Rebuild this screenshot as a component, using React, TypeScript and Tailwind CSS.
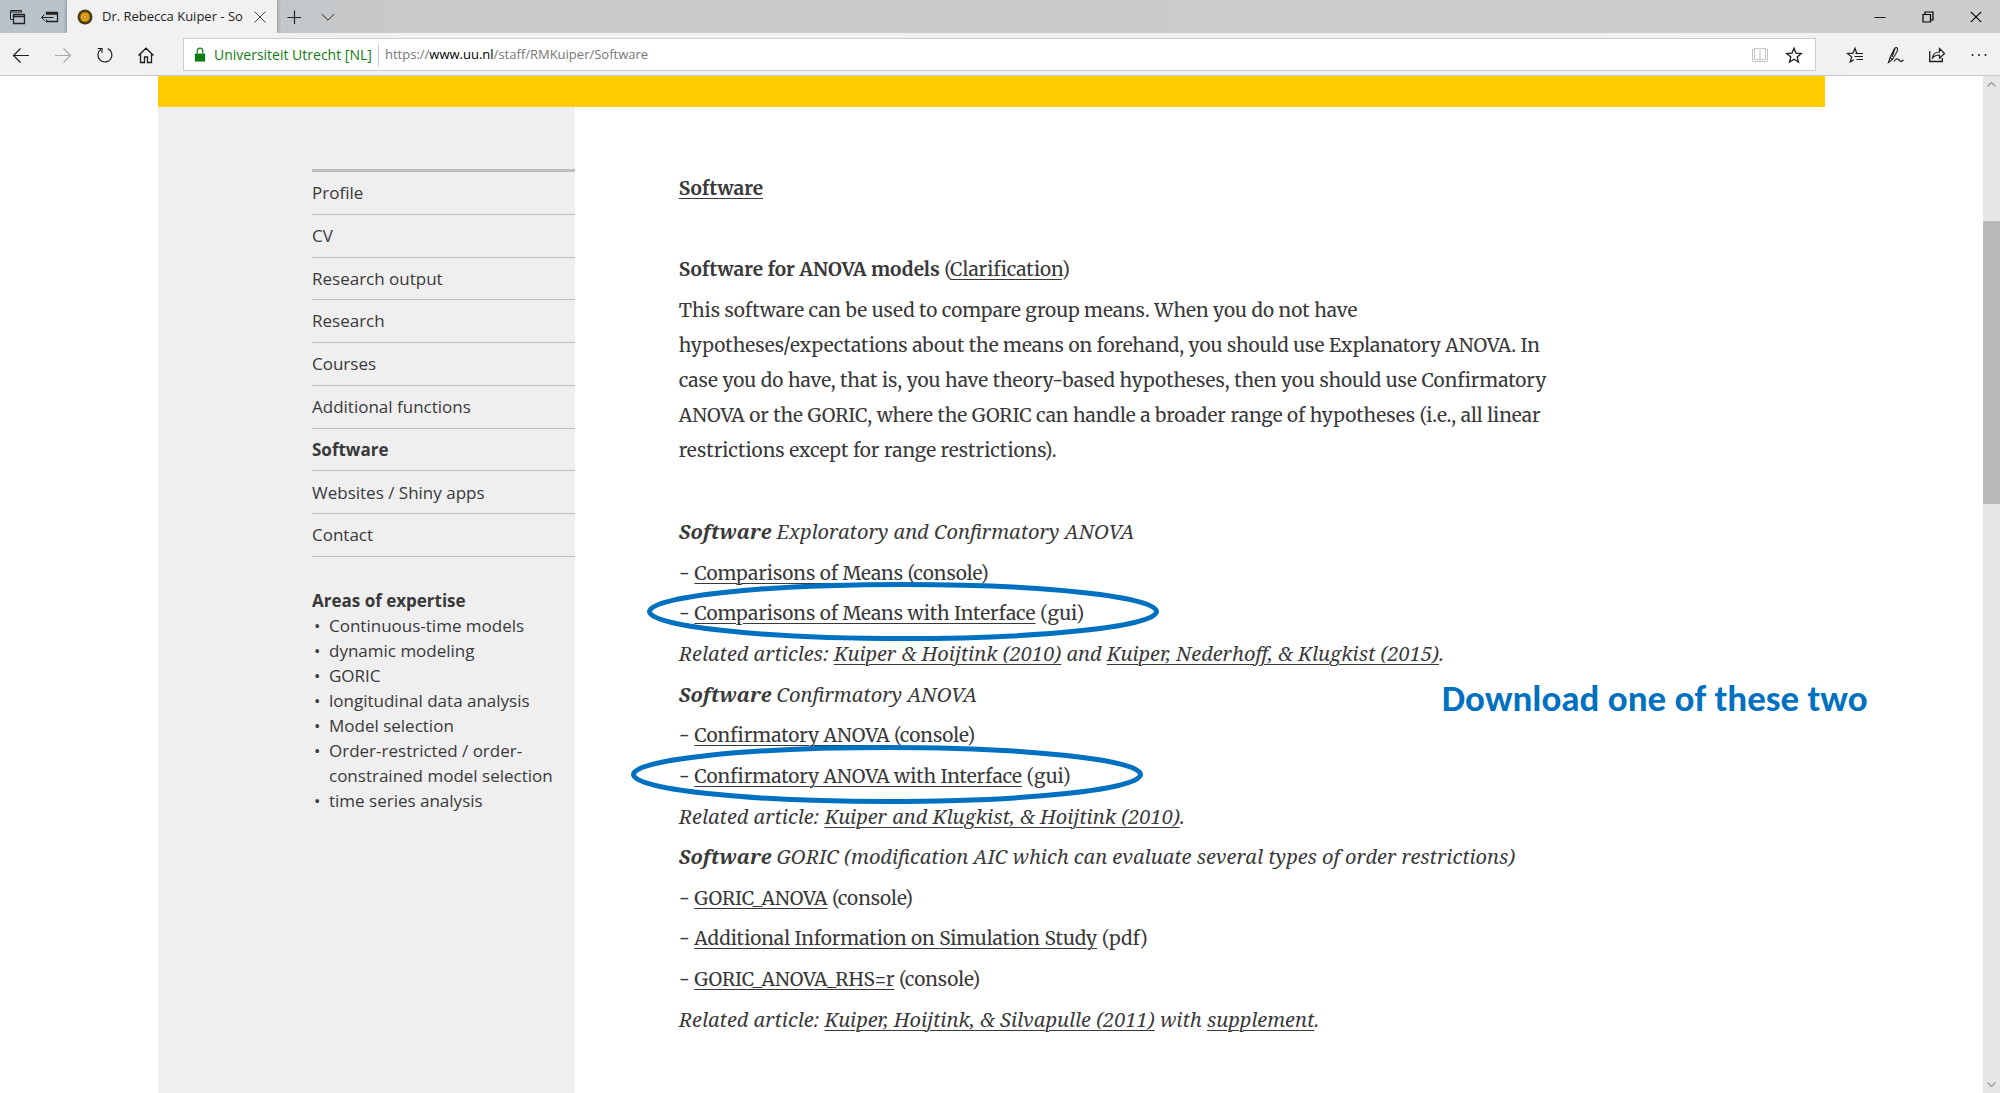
import React from 'react';

const NAV = [
  'Profile',
  'CV',
  'Research output',
  'Research',
  'Courses',
  'Additional functions',
  'Software',
  'Websites / Shiny apps',
  'Contact',
];

const AREAS = [
  'Continuous-time models',
  'dynamic modeling',
  'GORIC',
  'longitudinal data analysis',
  'Model selection',
  'Order-restricted / order-constrained model selection',
  'time series analysis',
];

function Icon({ children }: { children: React.ReactNode }) {
  return (
    <svg
      viewBox="0 0 16 16"
      aria-hidden="true"
      className="size-4 shrink-0 overflow-visible fill-none stroke-current"
    >
      {children}
    </svg>
  );
}

function IconButton({
  label,
  className = '',
  children,
}: {
  label: string;
  className?: string;
  children: React.ReactNode;
}) {
  return (
    <button type="button" aria-label={label} className={`flex h-full items-center justify-center ${className}`}>
      {children}
    </button>
  );
}

function TitleBar() {
  return (
    <header className="flex h-[33px] bg-linear-to-r from-[#b7c2cb] via-[#c8c9c9] via-20% to-[#cbcdce] text-[#222]">
      <div className="flex w-[67px]">
        <IconButton label="Tabs you've set aside" className="w-[33px]">
          <Icon>
            <path d="M3.5 10.5h-2v-9h11v2M1.5 3h11" />
            <path d="M4.5 5.5h11v9h-11zM4.5 7.5h11" strokeWidth="1.3" />
          </Icon>
        </IconButton>
        <IconButton label="Set these tabs aside" className="w-[34px]">
          <Icon>
            <path d="M4.5 5.5v-2h11v9h-11v-2M4.5 5h11" strokeWidth="1.3" />
            <path d="M11.500 8.500h-12M2.500 5.500l-3 3 3 3" />
          </Icon>
        </IconButton>
      </div>
      <div className="flex w-[210px] items-center bg-[#f1f1f1] pl-[10px] shadow-[0_0_4px_#0006] [clip-path:inset(0_-4px)]">
        <svg viewBox="0 0 16 16" aria-hidden="true" className="size-4 shrink-0">
          <circle cx="8" cy="8" r="7.500" fill="#4a3c12" />
          <circle cx="8" cy="8" r="4.800" fill="#e3a60c" stroke="#8a6a10" />
          <circle cx="8" cy="8" r="1.500" fill="#f3d9b0" stroke="#b5561c" strokeWidth=".8" />
        </svg>
        <span className="ml-[9px] flex-1 text-[13px] whitespace-nowrap">Dr. Rebecca Kuiper - So</span>
        <IconButton label="Close tab" className="w-[35px]">
          <svg viewBox="0 0 12 12" className="size-3 fill-none stroke-[#444]">
            <path d="M.5.5l11 11M11.500.5l-11 11" />
          </svg>
        </IconButton>
      </div>
      <IconButton label="New tab" className="w-[34px]">
        <svg viewBox="0 0 14 14" className="size-[14px] fill-none stroke-current">
          <path d="M7.500.5v14M.5 7.500h14" strokeWidth="1.200" />
        </svg>
      </IconButton>
      <IconButton label="Tab previews" className="w-[34px]">
        <svg viewBox="0 0 14 14" className="size-[14px] fill-none stroke-current">
          <path d="M.8 4l6.200 6.200L13.200 4" />
        </svg>
      </IconButton>
      <div className="ml-auto flex">
        <IconButton label="Minimize" className="w-12">
          <svg viewBox="0 0 12 12" className="size-3 fill-none stroke-current">
            <path d="M.5 6.500h11" />
          </svg>
        </IconButton>
        <IconButton label="Restore" className="w-12">
          <svg viewBox="0 0 12 12" className="size-3 fill-none stroke-black">
            <path d="M1 3.500h7.500V11H1zM3 3.500V1h8v8H8.500" strokeWidth="1.200" />
          </svg>
        </IconButton>
        <IconButton label="Close" className="w-12">
          <svg viewBox="0 0 12 12" className="size-3 fill-none stroke-black">
            <path d="M.8.8l10.400 10.400M11.200.8L.8 11.200" strokeWidth="1.100" />
          </svg>
        </IconButton>
      </div>
    </header>
  );
}

function Toolbar() {
  return (
    <div className="flex h-[43px] items-center border-b border-[#c9c9c9] bg-[#f1f1f1] pt-px text-[#1c1c1c]">
      <div className="flex h-full w-[183px]">
        <IconButton label="Back" className="w-[42px]">
          <Icon>
            <path d="M16 8.500H1M7.500 1.500l-7 7 7 7" strokeWidth="1.200" />
          </Icon>
        </IconButton>
        <IconButton label="Forward" className="w-[42px] text-[#a9a9a9]">
          <Icon>
            <path d="M0 8.500h15M8.500 1.500l7 7-7 7" strokeWidth="1.200" />
          </Icon>
        </IconButton>
        <IconButton label="Refresh" className="w-[41px]">
          <Icon>
            <path d="M10.800 1.600a7 7 0 1 1-6.800.6" strokeWidth="1.200" />
            <path d="M.8 1.500h4.200v4.300" strokeWidth="1.200" />
          </Icon>
        </IconButton>
        <IconButton label="Home" className="w-[41px]">
          <Icon>
            <path d="M.5 8.500L8 1.200l7.500 7.300M2.500 7v8.500h4V10h3v5.500h4V7" strokeWidth="1.300" />
          </Icon>
        </IconButton>
      </div>
      <div className="flex h-[33px] flex-1 items-center border border-[#cdcdcd] bg-white">
        <svg viewBox="0 0 12 16" aria-hidden="true" className="ml-[10px] h-[15px] w-3 fill-none">
          <path d="M3 7V4.500a3 3.300 0 0 1 6 0V7" stroke="#107c10" strokeWidth="1.300" />
          <path d="M.5 7h11v8.500H.5z" fill="#107c10" />
        </svg>
        <span className="ml-[8px] w-[165px] border-r border-[#cdcdcd] text-[14px] leading-6 whitespace-nowrap text-[#107c10]">
          Universiteit Utrecht [NL]
        </span>
        <a href="#software" className="ml-[6px] flex-1 text-[13px] whitespace-nowrap text-[#767676]">
          https://<span className="text-black">www.uu.nl</span>/staff/RMKuiper/Software
        </a>
        <IconButton label="Reading view" className="w-[34px] text-[#c4c4c4]">
          <Icon>
            <path d="M2.500 1.500h4Q8 1.500 8 2.500q0-1 1.500-1h4v11h-4q-1.500 0-1.500 1 0-1-1.500-1h-4zM8 2.500v11M2.500 2.500h-2v12h15v-12h-2" />
          </Icon>
        </IconButton>
        <IconButton label="Add to favorites" className="mr-[4px] w-[34px]">
          <Icon>
            <path d="M8 1.200l2 4.900 5.300.4-4.100 3.400 1.300 5.100L8 12.200 3.500 15l1.300-5.100L.7 6.500 6 6.100z" strokeWidth="1.300" />
          </Icon>
        </IconButton>
      </div>
      <div className="ml-[18px] flex h-full">
        <IconButton label="Hub" className="w-[41px]">
          <Icon>
            <path d="M9.800 6.500L8 1.200 6 6.100.5 6.500l4.100 3.400L3.300 15 6.800 12.700" strokeWidth="1.200" />
            <path d="M8.500 6.500H16M7.500 9.500H16M9.500 12.500H16" strokeWidth="1.200" />
          </Icon>
        </IconButton>
        <IconButton label="Add notes" className="w-[41px]">
          <Icon>
            <path
              d="M.5 15.500L2 10.500 6.500 1.500Q8.500-.5 9.500 1.500q.3 1-.5 3L4.500 12.500zM2 10.500l2.500 2M7 1.500L4 10M6 14.500q2.500-4 4.500-2t2 2q1.500 0 3-1.500"
              strokeWidth="1.100"
            />
          </Icon>
        </IconButton>
        <IconButton label="Share" className="w-[41px]">
          <Icon>
            <path d="M.7 4v10.500h12.600V11" strokeWidth="1.300" />
            <path d="M3.500 11Q4 5 10.500 5V1.500l5 5-5 4.800V8Q6 8 3.500 11z" strokeWidth="1.200" />
          </Icon>
        </IconButton>
        <IconButton label="Settings and more" className="w-[43px]">
          <Icon>
            <path d="M1.500 8h0M8 8h0M14.500 8h0" strokeWidth="2" strokeLinecap="round" />
          </Icon>
        </IconButton>
      </div>
    </div>
  );
}

function Sidebar() {
  return (
    <aside className="w-1/4 shrink-0 bg-[#efefef] pt-[62px] pl-[154px] text-[17px]">
      <nav className="grid h-[388px] auto-rows-fr border-t-3 border-[#bdbdbd]">
        {NAV.map((item) => (
          <a
            key={item}
            href="#software"
            className={`flex items-center border-b border-[#bdbdbd] ${item === 'Software' ? 'font-bold' : ''}`}
          >
            {item}
          </a>
        ))}
      </nav>
      <h2 className="mt-[31px] leading-[25px] font-bold">Areas of expertise</h2>
      <ul className="leading-[25px]">
        {AREAS.map((area) => (
          <li key={area} className="flex">
            <span className="w-[17px] shrink-0 pl-[2px]">•</span>
            <span className="pr-5">{area}</span>
          </li>
        ))}
      </ul>
    </aside>
  );
}

function Link({ children }: { children: React.ReactNode }) {
  return (
    <a href="#software" className="underline decoration-1 underline-offset-3">
      {children}
    </a>
  );
}

function Em({ children }: { children: React.ReactNode }) {
  return <em className="font-['Noto_Serif','Liberation_Serif',serif] text-[20px]">{children}</em>;
}

function Ring({ className }: { className: string }) {
  return (
    <svg
      viewBox="0 0 512 59"
      aria-hidden="true"
      className={`pointer-events-none absolute -top-[17px] h-[59px] w-[512px] max-w-none fill-none stroke-[#0070c0] ${className}`}
    >
      <ellipse cx="256" cy="29.500" rx="253.500" ry="27" strokeWidth="5" />
    </svg>
  );
}

function Main() {
  return (
    <main
      id="software"
      className="min-w-0 flex-1 pt-[63px] pb-[50px] pl-[104px] font-['Merriweather','Noto_Serif','Liberation_Serif',serif] text-[19px]"
    >
      <h1 className="leading-[36px] font-bold underline decoration-1 underline-offset-3">Software</h1>
      <h2 className="mt-[45px] leading-[36px]">
        <strong className="font-bold">Software for ANOVA models</strong> (<Link>Clarification</Link>)
      </h2>
      <p className="mt-[6px] leading-[35px]">
        This software can be used to compare group means. When you do not have
        <br />
        hypotheses/expectations about the means on forehand, you should use Explanatory ANOVA. In
        <br />
        case you do have, that is, you have theory-based hypotheses, then you should use Confirmatory
        <br />
        ANOVA or the GORIC, where the GORIC can handle a broader range of hypotheses (i.e., all linear
        <br />
        restrictions except for range restrictions).
      </p>
      <div className="mt-[44px] grid h-[528px] auto-rows-fr items-center">
        <p>
          <Em>
            <strong>Software</strong> Exploratory and Confirmatory ANOVA
          </Em>
        </p>
        <p>
          - <Link>Comparisons of Means</Link> (console)
        </p>
        <p className="relative">
          <Ring className="-left-8" />- <Link>Comparisons of Means with Interface</Link> (gui)
        </p>
        <p>
          <Em>
            Related articles: <Link>Kuiper &amp; Hoijtink (2010)</Link> and{' '}
            <Link>Kuiper, Nederhoff, &amp; Klugkist (2015)</Link>.
          </Em>
        </p>
        <p className="relative">
          <Em>
            <strong>Software</strong> Confirmatory ANOVA
          </Em>
          <span className="absolute -top-1 left-[763px] font-['Carlito','Lato',sans-serif] text-[37px] leading-[45px] font-bold whitespace-nowrap text-[#0070c0]">
            Download one of these two
          </span>
        </p>
        <p>
          - <Link>Confirmatory ANOVA</Link> (console)
        </p>
        <p className="relative">
          <Ring className="-left-12" />- <Link>Confirmatory ANOVA with Interface</Link> (gui)
        </p>
        <p>
          <Em>
            Related article: <Link>Kuiper and Klugkist, &amp; Hoijtink (2010)</Link>.
          </Em>
        </p>
        <p>
          <Em>
            <strong>Software</strong> GORIC (modification AIC which can evaluate several types of order restrictions)
          </Em>
        </p>
        <p>
          - <Link>GORIC_ANOVA</Link> (console)
        </p>
        <p>
          - <Link>Additional Information on Simulation Study</Link> (pdf)
        </p>
        <p>
          - <Link>GORIC_ANOVA_RHS=r</Link> (console)
        </p>
        <p>
          <Em>
            Related article: <Link>Kuiper, Hoijtink, &amp; Silvapulle (2011)</Link> with <Link>supplement</Link>.
          </Em>
        </p>
      </div>
    </main>
  );
}

function ScrollBar() {
  return (
    <div className="flex w-[17px] shrink-0 flex-col items-center justify-between bg-[#e6e6e6] py-[6px]">
      <svg viewBox="0 0 9 5" aria-hidden="true" className="h-[5px] w-[9px] fill-none stroke-[#999]">
        <path d="M.5 4.500l4-4 4 4" strokeWidth="1.300" />
      </svg>
      <div className="mt-[134px] mb-auto h-[283px] w-full bg-[#b9b9b9]" />
      <svg viewBox="0 0 9 5" aria-hidden="true" className="h-[5px] w-[9px] fill-none stroke-[#999]">
        <path d="M.5.5l4 4 4-4" strokeWidth="1.300" />
      </svg>
    </div>
  );
}

export default function App() {
  return (
    <div className="flex min-h-screen flex-col bg-white font-['Open_Sans','Noto_Sans',sans-serif] text-[#393939]">
      <TitleBar />
      <Toolbar />
      <div className="flex flex-1">
        <div className="flex flex-1 flex-col px-[158px]">
          <div className="h-[31px] bg-[#ffcd00]" />
          <div className="flex flex-1">
            <Sidebar />
            <Main />
          </div>
        </div>
        <ScrollBar />
      </div>
    </div>
  );
}
